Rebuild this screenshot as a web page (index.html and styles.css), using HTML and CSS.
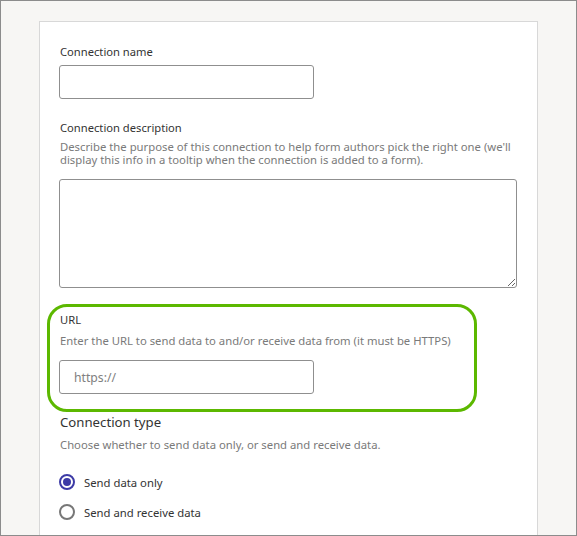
FILE: index.html
```html
<!DOCTYPE html>
<html>
<head>
<meta charset="utf-8">
<link rel="stylesheet" href="styles.css">
</head>
<body>
<div class="frame">
  <div class="card">
    <div class="label l-name">Connection name</div>
    <div class="input"></div>
    <div class="label l-desc">Connection description</div>
    <div class="help h-desc">Describe the purpose of this connection to help form authors pick the right one (we'll display this info in a tooltip when the connection is added to a form).</div>
    <textarea class="textarea"></textarea>
    <div class="label l-url">URL</div>
    <div class="help h-url">Enter the URL to send data to and/or receive data from (it must be HTTPS)</div>
    <div class="input url-input"><span class="placeholder">https://</span></div>
    <div class="heading">Connection type</div>
    <div class="help h-type">Choose whether to send data only, or send and receive data.</div>
    <div class="radios">
      <div class="radio-row"><span class="radio checked"></span><span class="radio-label">Send data only</span></div>
      <div class="radio-row"><span class="radio"></span><span class="radio-label">Send and receive data</span></div>
    </div>
  </div>
  <div class="highlight"></div>
</div>
</body>
</html>
```
FILE: styles.css
```css
* { box-sizing: border-box; }
html, body { margin: 0; padding: 0; }
body {
  font-family: "Noto Sans", "Open Sans", sans-serif;
  color: #333;
}
.frame {
  position: relative;
  width: 577px;
  height: 536px;
  border: 1px solid #8c8c8c;
  background: #f7f6f4;
  overflow: hidden;
  padding: 20px 0 0 38px;
}
.card {
  width: 499px;
  height: 540px;
  background: #fff;
  border: 1px solid #d8d8d8;
  padding: 22px 19px 0 19px;
  display: flex;
  flex-direction: column;
  align-items: flex-start;
}
.label {
  font-size: 11.2px;
  line-height: 16px;
  color: #333;
  margin-left: 1px;
}
.help {
  font-size: 11.3px;
  line-height: 13px;
  color: #7a7a7a;
  margin-left: 1px;
}
.input {
  width: 255px;
  height: 34px;
  border: 1px solid #8f8f8f;
  border-radius: 3px;
  margin-top: 5px;
  background: #fff;
  display: flex;
  align-items: center;
}
.l-desc { margin-top: 21px; }
.h-desc { margin-top: 4px; width: 456px; }
.textarea {
  display: block;
  width: 458px;
  height: 109px;
  margin: 13px 0 0 0;
  border: 1px solid #8f8f8f;
  border-radius: 3px;
  background: #fff;
  resize: both;
  padding: 0;
}
.l-url { margin-top: 24px; }
.h-url { margin-top: 6px; }
.url-input { margin-top: 13px; }
.placeholder {
  font-size: 12.2px;
  color: #808080;
  margin-left: 14px;
}
.heading {
  margin-top: 18px;
  font-size: 13.2px;
  line-height: 20px;
  color: #333;
  margin-left: 1px;
}
.h-type { margin-top: 6px; }
.radios {
  margin-top: 20px;
  display: flex;
  flex-direction: column;
  gap: 8px;
}
.radio-row {
  display: flex;
  align-items: center;
  height: 22px;
}
.radio {
  width: 16px;
  height: 16px;
  border: 2px solid #777;
  border-radius: 50%;
  display: flex;
  align-items: center;
  justify-content: center;
}
.radio.checked { border-color: #3d3ba6; }
.radio.checked::after {
  content: "";
  width: 8px;
  height: 8px;
  border-radius: 50%;
  background: #3d3ba6;
}
.radio-label {
  margin-left: 9px;
  font-size: 11.3px;
  color: #333;
}
.highlight {
  position: absolute;
  left: 46px;
  top: 303px;
  width: 430px;
  height: 108px;
  border: 3px solid #5cb800;
  border-radius: 20px;
  pointer-events: none;
}
```
